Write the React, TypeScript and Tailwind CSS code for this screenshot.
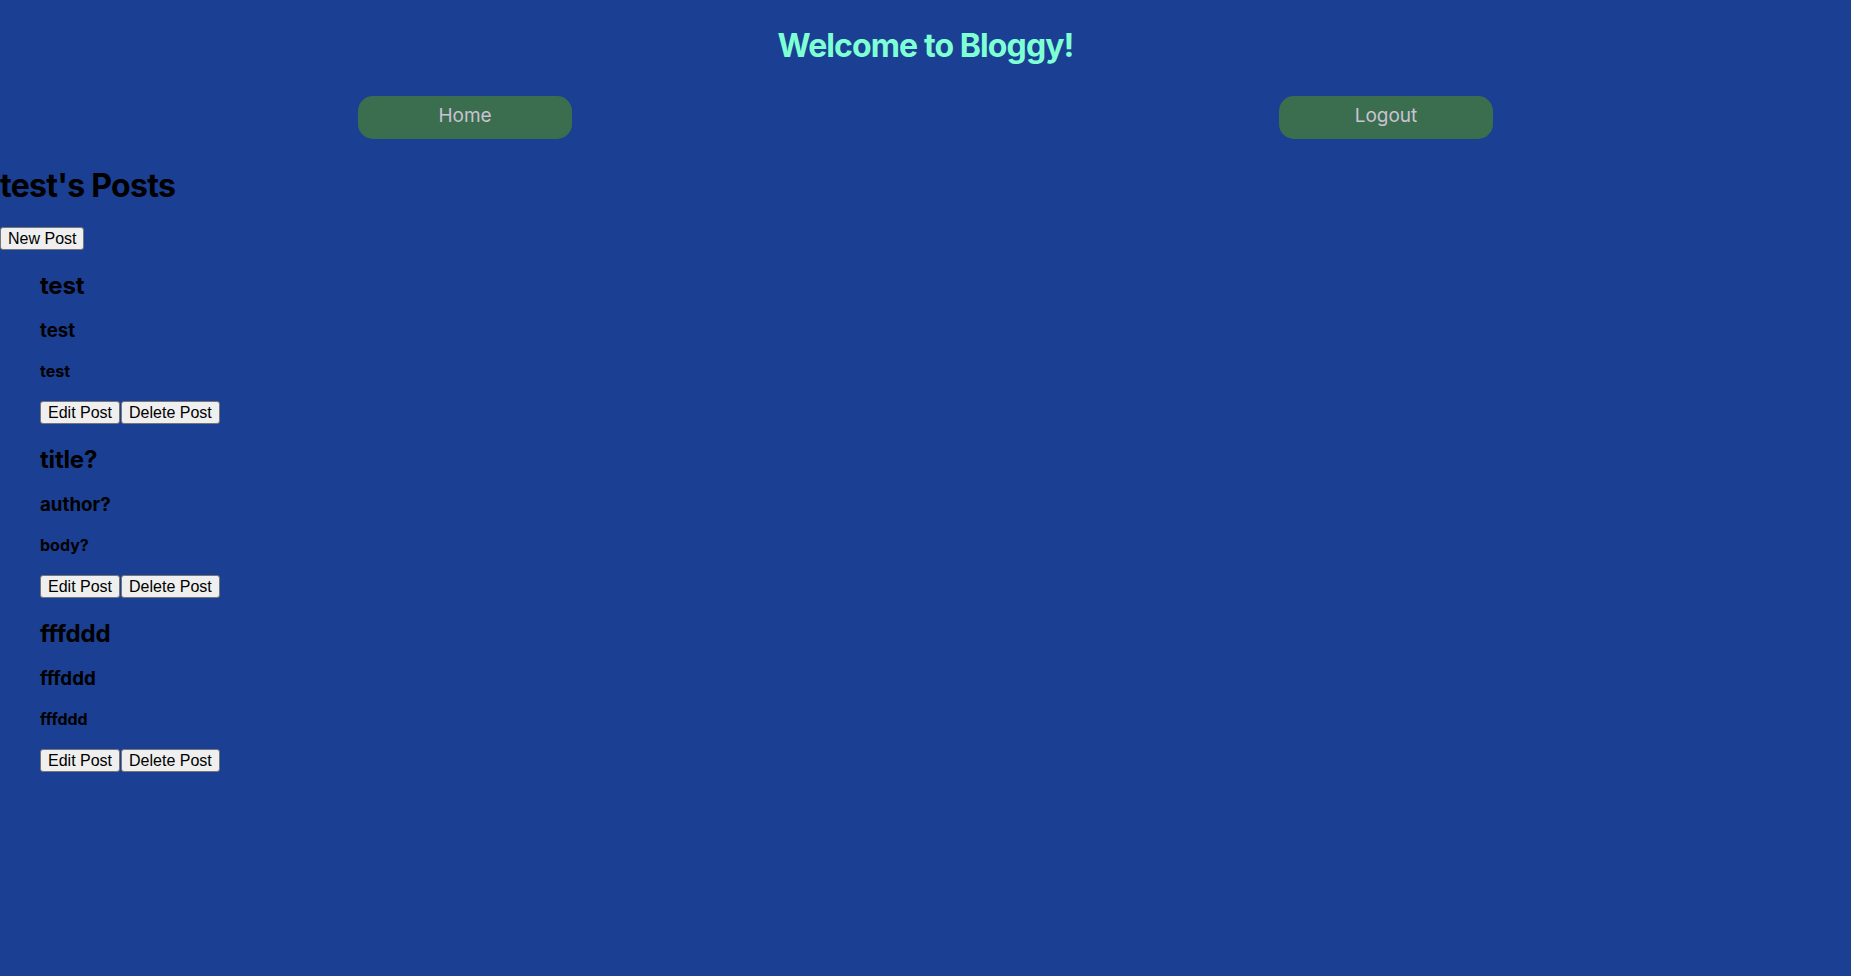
import React from 'react';

type Post = { id: number; title: string; author: string; body: string };

const POSTS: Post[] = [
  { id: 1, title: 'test', author: 'test', body: 'test' },
  { id: 2, title: 'title?', author: 'author?', body: 'body?' },
  { id: 3, title: 'fffddd', author: 'fffddd', body: 'fffddd' },
];

const sans = "font-['Inter','Noto_Sans',sans-serif]";
const btn =
  "font-['Liberation_Sans',Arial,sans-serif] text-[16px] leading-[19px] text-black bg-[#efefef] border border-[#767676] rounded-[3px] px-[7px] py-px";

function NavButton({ label }: { label: string }) {
  return (
    <div className="w-[214px] h-[43px] rounded-[15px] bg-[#3a6e4f] pt-[8px] text-center text-[19px] leading-[23px] text-[#c9c3d3]">
      {label}
    </div>
  );
}

function PostItem({ post }: { post: Post }) {
  return (
    <li className="mt-[21px]">
      <h2 className="text-[24px] leading-[29px] font-bold tracking-[-0.2px]">{post.title}</h2>
      <h3 className="mt-[19px] text-[18.72px] leading-[23px] font-bold">{post.author}</h3>
      <h4 className="mt-[20px] text-[16px] leading-[19px] font-bold">{post.body}</h4>
      <div className="mt-[20px] flex gap-px">
        <button className={btn}>Edit Post</button>
        <button className={btn}>Delete Post</button>
      </div>
    </li>
  );
}

export default function App() {
  return (
    <div className={`min-h-screen bg-[#1a3f93] text-black pt-[27px] ${sans}`}>
      <h1 className="text-center text-[32px] leading-[38px] font-bold tracking-[-0.9px] text-[#7fffd4]">
        Welcome to Bloggy!
      </h1>

      <nav className="mt-[31px] px-[4.5px] flex justify-around">
        <NavButton label="Home" />
        <NavButton label="Logout" />
      </nav>

      <h1 className="mt-[28px] text-[32px] leading-[38px] font-bold tracking-[-0.7px]">test's Posts</h1>

      <div className="mt-[21px]">
        <button className={btn}>New Post</button>
      </div>

      <ul className="pl-[40px] list-none">
        {POSTS.map((p) => (
          <PostItem key={p.id} post={p} />
        ))}
      </ul>
    </div>
  );
}
